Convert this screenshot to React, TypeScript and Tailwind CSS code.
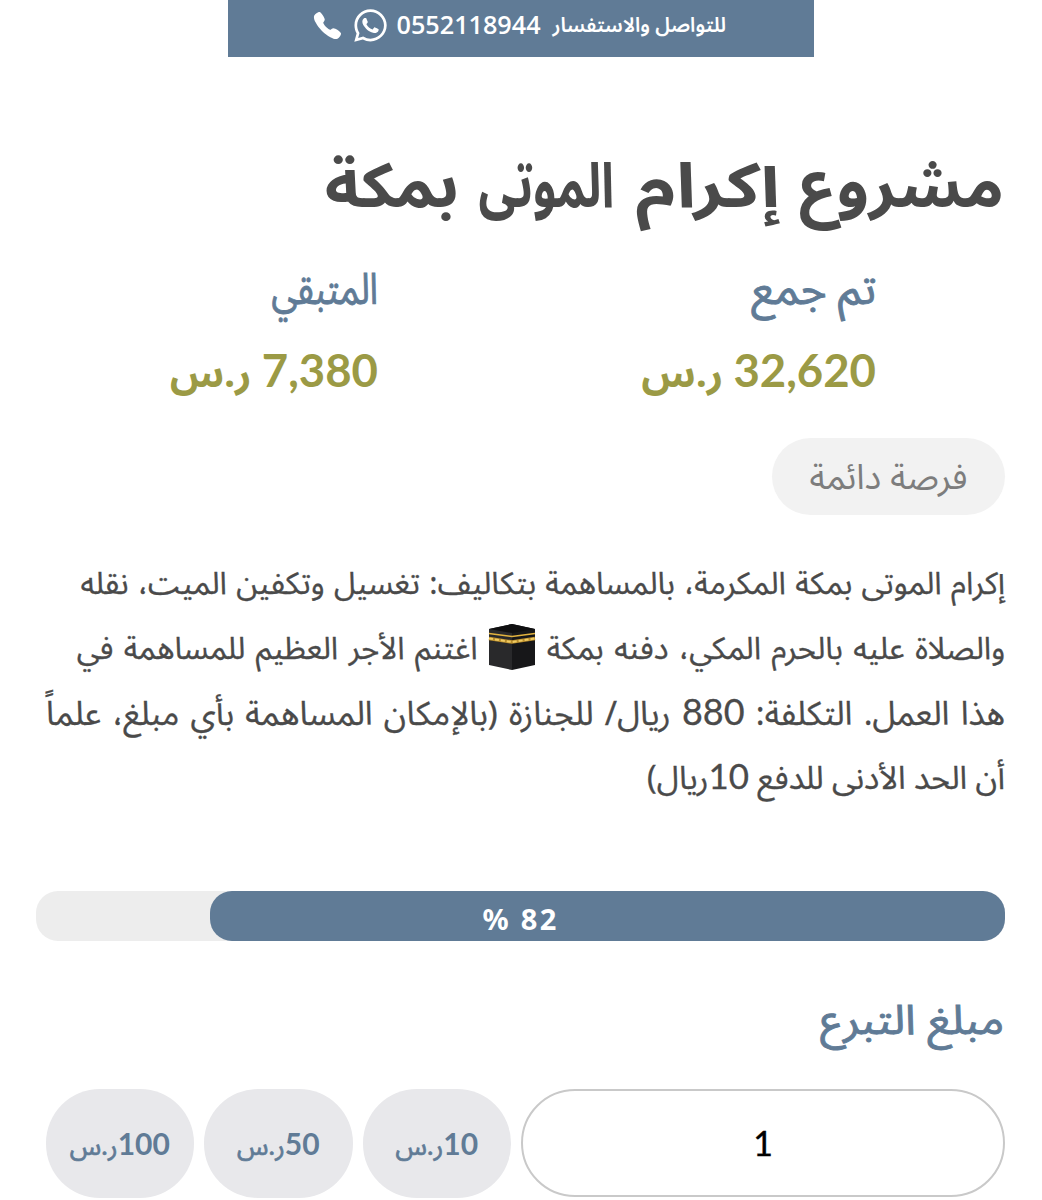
import { FaWhatsapp } from 'react-icons/fa'
import { IoCall } from 'react-icons/io5'
import type { ReactNode } from 'react'

const amounts = [10, 50, 100]

function Num({ children }: { children: ReactNode }) {
  return <span className="font-['Lato'] text-[1.09em] leading-none">{children}</span>
}

function Kaaba() {
  return (
    <svg viewBox="0 0 48 46" className="inline-block w-[48px] h-[46px] align-[-11px]">
      <path d="M1 5 24 0v46L1 41Z" fill="#29292b" />
      <path d="M24 0 47 5v36L24 46Z" fill="#171719" />
      <path d="M1 5 24 0l23 5-23 4Z" fill="#0f0f10" />
      <path d="M1 9.500 24 12.500l23-3" fill="none" stroke="#e2b33f" strokeWidth="1.500" />
      <path d="M1 14.500 24 18l23-3.500" fill="none" stroke="#b98d2c" strokeWidth="3.500" />
      <path d="M1 14.500 24 18l23-3.500" fill="none" stroke="#f0cb62" strokeWidth="2" strokeDasharray="4 2" />
    </svg>
  )
}

function Stat({ label, value }: { label: ReactNode; value: string }) {
  return (
    <div className="w-[498px] shrink-0 pr-[129px] whitespace-nowrap">
      <div className="h-[80px] leading-[82px] text-[43px] text-[#607b96] [-webkit-text-stroke:0.9px]">{label}</div>
      <div className="h-[80px] leading-[90px] text-[39.500px] font-bold text-[#9b9a45]">
        <span className="font-['Lato'] text-[45.500px] leading-none tracking-[1.2px]">{value}</span> ر.س
      </div>
    </div>
  )
}

export default function App() {
  return (
    <div
      dir="rtl"
      className="h-[1200px] w-[1042px] overflow-hidden bg-white font-['Noto_Sans_Arabic','Noto_Sans',sans-serif] text-[#4a4a4a]"
    >
      <header className="mx-auto flex h-[57px] w-[586px] items-center bg-[#607b96] pr-[88px] pb-[7px] text-white">
        <span className="pt-[2px] text-[20.300px] font-semibold whitespace-nowrap">للتواصل والاستفسار</span>
        <span className="mr-[12px] font-['Open_Sans'] text-[25.200px] font-semibold">0552118944</span>
        <FaWhatsapp className="mr-[8px] size-[37px]" />
        <IoCall className="mr-[9px] size-[31px]" />
      </header>

      <main className="pr-[38px] pl-[36px]">
        <h1 className="mt-[79px] mb-[4px] flex h-[110px] text-[62px] leading-[104px] font-bold whitespace-nowrap">
          <span className="w-[203px] origin-right scale-x-[1.06]">مشروع</span>{' '}
          <span className="mr-[21px] w-[144px] origin-right scale-x-[1.18]">إكرام</span>{' '}
          <span className="mr-[22px] w-[134px] origin-right scale-x-[0.76]">الموتى</span>{' '}
          <span className="mr-[21px] w-[134px] origin-right scale-x-[1.08]">بمكة</span>
        </h1>

        <div className="-mr-px flex">
          <Stat label={<span className="inline-block origin-right scale-x-[1.03]">تم جمع</span>} value="32,620" />
          <Stat label={<span className="inline-block origin-right scale-x-[0.82]">المتبقي</span>} value="7,380" />
        </div>

        <div className="-mr-px mt-[28px] flex h-[77px] w-[233px] items-center justify-center rounded-full bg-[#f2f2f2] pt-[3px] text-[35px] text-[#7d7d7d]">
          فرصة دائمة
        </div>

        <div className="-mr-px mt-[37px] text-[31px] leading-[65px] whitespace-nowrap *:h-[65px] [-webkit-text-stroke:0.3px]">
          <p className="[word-spacing:1.3px]">
            إكرام الموتى بمكة المكرمة، بالمساهمة بتكاليف: تغسيل وتكفين الميت، نقله
          </p>
          <p className="[word-spacing:2.4px]">
            والصلاة عليه بالحرم المكي، دفنه بمكة <Kaaba /> اغتنم الأجر العظيم للمساهمة في
          </p>
          <p className="text-[33px] [word-spacing:2.7px]">
            هذا العمل. التكلفة: <Num>880</Num> ريال/ للجنازة (بالإمكان المساهمة بأي مبلغ، علماً
          </p>
          <p className="text-[32px]">
            أن الحد الأدنى للدفع <Num>10</Num>ريال)
          </p>
        </div>

        <div className="relative -mr-px mt-[79px] h-[50px] rounded-[22px] bg-[#ededed]">
          <div className="h-full w-[82%] rounded-[22px] bg-[#607b96]" />
          <span
            dir="ltr"
            className="absolute inset-0 pt-[3px] text-center font-['Noto_Sans'] text-[29px] leading-[50px] font-bold tracking-[2.3px] text-white"
          >
            % 82
          </span>
        </div>

        <h2 className="mt-[40px] h-[80px] text-[41px] leading-[80px] whitespace-nowrap text-[#607b96] [-webkit-text-stroke:0.9px]">
          <span className="inline-block origin-right scale-x-[1.1]">مبلغ التبرع</span>
        </h2>

        <div className="-mr-px mt-[28px] flex gap-[10px]">
          <div className="flex h-[108px] w-[484px] shrink-0 items-center justify-center rounded-full border-2 border-[#c9c9c9] pb-[2px] font-['Lato'] text-[34px] text-black [-webkit-text-stroke:0.4px]">
            1
          </div>
          {amounts.map((amount) => (
            <button
              key={amount}
              className="flex h-[109px] w-[148.500px] shrink-0 items-center justify-center rounded-[54px] bg-[#e8e8eb] pt-[5px] text-[26px] text-[#607b96]"
            >
              <span>
                <span className="font-['Lato'] text-[30px] leading-none font-bold">{amount}</span>
                <span className="[-webkit-text-stroke:0.7px]">ر.س</span>
              </span>
            </button>
          ))}
        </div>
      </main>
    </div>
  )
}
